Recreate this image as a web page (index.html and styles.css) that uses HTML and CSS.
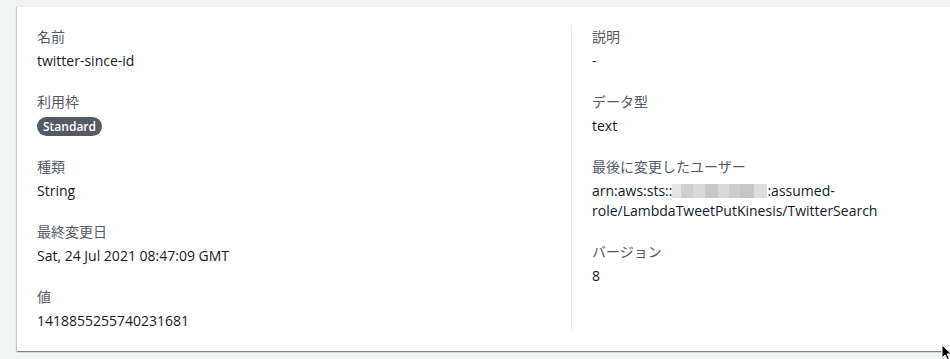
FILE: index.html
```html
<!DOCTYPE html>
<html lang="ja">
<head>
<meta charset="utf-8">
<link rel="stylesheet" href="styles.css">
</head>
<body>
<div class="page">
  <div class="card">
    <div class="col">
      <div class="item"><div class="label">名前</div><div class="value">twitter-since-id</div></div>
      <div class="item"><div class="label">利用枠</div><div class="value value-badge"><span class="badge">Standard</span></div></div>
      <div class="item"><div class="label">種類</div><div class="value">String</div></div>
      <div class="item"><div class="label">最終変更日</div><div class="value">Sat, 24 Jul 2021 08:47:09 GMT</div></div>
      <div class="item"><div class="label">値</div><div class="value">1418855255740231681</div></div>
    </div>
    <div class="col col-right">
      <div class="item"><div class="label">説明</div><div class="value">-</div></div>
      <div class="item"><div class="label">データ型</div><div class="value">text</div></div>
      <div class="item"><div class="label">最後に変更したユーザー</div><div class="value">arn:aws:sts::<span class="blur"></span>:assumed-role/LambdaTweetPutKinesis/TwitterSearch</div></div>
      <div class="item"><div class="label">バージョン</div><div class="value">8</div></div>
    </div>
  </div>
</div>
<svg class="cursor" width="12" height="16" viewBox="0 0 12 16"><path d="M1 1 L1 14 L4 11 L6.5 15.5 L8.5 14.5 L6 10 L10.5 10 Z" fill="#000" stroke="#fff" stroke-width="1"/></svg>
</body>
</html>
```
FILE: styles.css
```css
html, body {
  margin: 0;
  padding: 0;
  background: #f2f3f3;
  overflow: hidden;
  width: 950px;
  height: 359px;
}
.page {
  padding: 7px 0 0 17px;
  font-family: "Open Sans", "Noto Sans CJK JP", sans-serif;
  font-size: 14px;
  color: #16191f;
}
.card {
  width: 1200px;
  background: #fff;
  box-shadow: 0 1px 1px 0 rgba(0,28,36,0.3), 1px 1px 1px 0 rgba(0,28,36,0.15), -1px 1px 1px 0 rgba(0,28,36,0.15);
  border-top: 1px solid #eaeded;
  margin-top: -1px;
  padding: 18px 0 20px 20px;
  display: grid;
  grid-template-columns: 514px 514px;
  column-gap: 20px;
  box-sizing: border-box;
}
.col-right {
  border-left: 1px solid #eaeded;
  padding-left: 20px;
}
.item {
  margin-bottom: 19px;
}
.item:last-child {
  margin-bottom: 0;
}
.label {
  font-family: "Noto Sans CJK JP", sans-serif;
  color: #545b64;
  font-size: 14px;
  line-height: 22px;
}
.value {
  margin-top: 4px;
  line-height: 20px;
}
.value-badge {
  height: 20px;
  display: flex;
  align-items: flex-end;
}
.badge {
  display: block;
  background: #545b64;
  color: #fff;
  font-weight: 600;
  font-size: 12px;
  line-height: 19px;
  padding: 0 6px;
  border-radius: 10px;
}
.blur {
  display: inline-block;
  width: 95px;
  height: 14px;
  vertical-align: -2px;
  background:
    linear-gradient(90deg, #e4e4e4 0 10%, #cfcfcf 10% 22%, #dadada 22% 35%, #c8c8c8 35% 48%, #d8d8d8 48% 60%, #cdcdcd 60% 72%, #c6c6c6 72% 86%, #dedede 86% 100%);
}
.cursor {
  position: absolute;
  left: 941px;
  top: 344px;
}
```
